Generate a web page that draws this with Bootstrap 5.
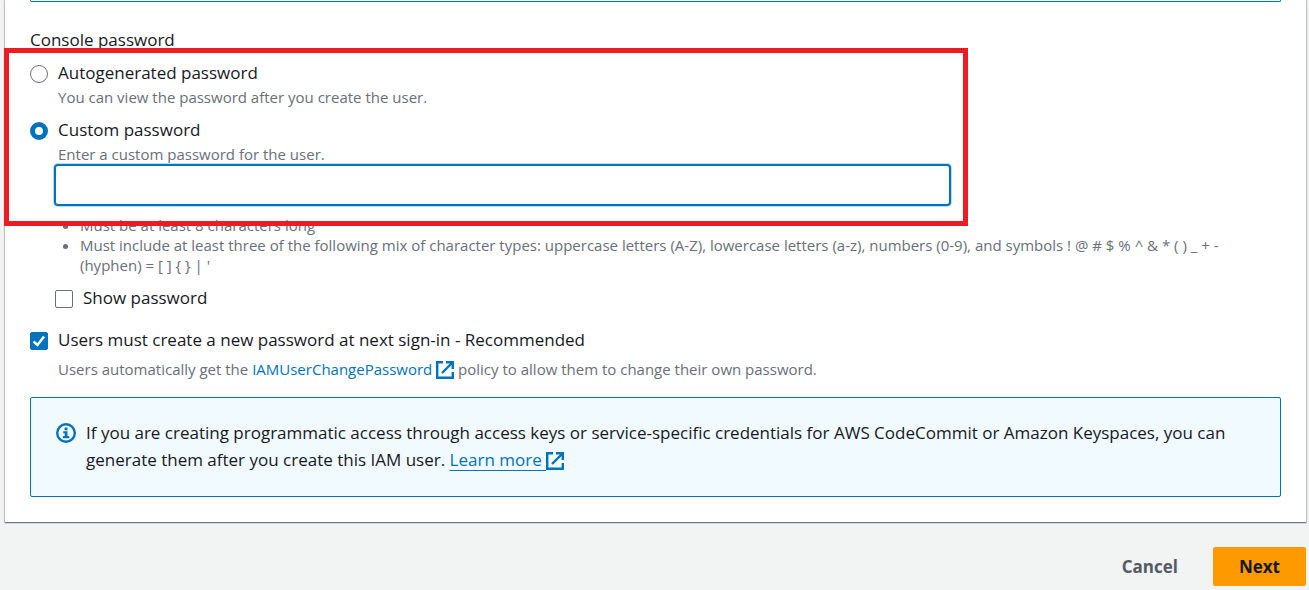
<!DOCTYPE html>
<html lang="en">
<head>
<meta charset="utf-8">
<meta name="viewport" content="width=device-width, initial-scale=1">
<title>Create user</title>
<link href="https://cdn.jsdelivr.net/npm/bootstrap@5.3.0/dist/css/bootstrap.min.css" rel="stylesheet">
<style>
  :root { --brand: #0073bb; --ink: #16191f; --muted: #687078; --line: #687078; }
  body { background: #f2f3f3; color: var(--ink); font-family: "Open Sans", "Noto Sans", sans-serif; font-size: 17px; line-height: 24px; }
  .page { padding: 0 3px 0 5px; }
  .panel { background: #fff; padding: 0 25px 25px; box-shadow: 0 1px 1px #6a757c, 0 0 1px 1px #c9d0d3; }
  .notice-end { height: 2px; border: 1px solid var(--brand); border-top: 0; border-radius: 0 0 2px 2px; background: #f1faff; }
  .section-label { margin-top: 26px; }
  .choices { padding-top: 9px; }
  .highlight { position: absolute; top: -4px; left: -26px; right: 0; bottom: -20px; border: 5px solid #ed1c24; pointer-events: none; z-index: 2; }
  .choice { display: flex; gap: 10px; }
  .form-check-input.tick { flex: none; width: 18px; height: 18px; margin: 4px 0 0; border: 1px solid var(--line); background-color: #fff; }
  .form-check-input.tick[type=checkbox] { border-radius: 2px; }
  .form-check-input.tick:checked { border-color: var(--brand); background-color: var(--brand); }
  .form-check-input.tick[type=checkbox]:checked { background-size: 16px; background-image: url("data:image/svg+xml,%3csvg xmlns='http://www.w3.org/2000/svg' viewBox='0 0 16 16'%3e%3cpath fill='none' stroke='%23fff' stroke-width='2.500' d='M2.500 8.500 6.500 12 13 3.500'/%3e%3c/svg%3e"); }
  .form-check-input.tick[type=radio]:checked { border: 5px solid var(--brand); background: #fff; }
  .hint { color: var(--muted); font-size: 15px; line-height: 20px; }
  .choices .hint { margin-top: 2px; }
  .custom-choice { margin-top: 11px; }
  .secret { width: auto; align-self: stretch; height: 42px; margin: 0 17px 0 24px; border: 2px solid var(--brand); border-radius: 4px; box-shadow: 0 0 0 1px #b9dcf0; }
  .secret:focus { border-color: var(--brand); box-shadow: 0 0 0 1px #b9dcf0; }
  .rules { margin: 9px 24px 0; padding-left: 26px; color: var(--muted); font-size: 15px; line-height: 20px; }
  .show-choice { margin: 11px 0 0 25px; }
  .renew-choice { margin-top: 18px; }
  .renew-choice .hint { margin-top: 7px; }
  a { color: var(--brand); text-decoration: none; }
  .out-icon { width: 18px; height: 18px; fill: none; stroke: var(--brand); stroke-width: 2.4; vertical-align: -4px; }
  .info-box { margin: 18px 0 0; padding: 21px 25px 23px; border: 1px solid var(--brand); border-radius: 2px; background: #f1faff; line-height: 27px; gap: 10px; }
  .info-icon { flex: none; width: 20px; height: 20px; margin-top: 4px; }
  .learn { text-decoration: underline 1px; text-underline-offset: 4px; text-decoration-skip-ink: none; }
  .actions { margin-top: 25px; padding-bottom: 4px; }
  .actions .btn { height: 39px; padding: 0 26px; border: 0; border-radius: 2px; font-size: 17px; font-weight: 700; line-height: 38px; }
  .btn.cancel { color: #545b64; margin-right: 9px; }
  .btn.next { color: var(--ink); background: #ff9900; }
</style>
</head>
<body>
<main class="page">
  <form>
    <section class="panel">
      <div class="notice-end"></div>
      <div class="section-label" id="pw-label">Console password</div>
      <div class="choices position-relative w-75 d-flex flex-column" role="radiogroup" aria-labelledby="pw-label">
        <div class="choice">
          <input class="form-check-input tick" type="radio" name="pw" id="pw-auto">
          <div>
            <label class="d-block" for="pw-auto">Autogenerated password</label>
            <div class="hint">You can view the password after you create the user.</div>
          </div>
        </div>
        <div class="choice custom-choice">
          <input class="form-check-input tick" type="radio" name="pw" id="pw-custom" checked>
          <div>
            <label class="d-block" for="pw-custom">Custom password</label>
            <div class="hint">Enter a custom password for the user.</div>
          </div>
        </div>
        <input class="form-control secret" type="password" aria-label="Custom password">
        <div class="highlight"></div>
      </div>
      <ul class="rules">
        <li>Must be at least 8 characters long</li>
        <li>Must include at least three of the following mix of character types: uppercase letters (A-Z), lowercase letters (a-z), numbers (0-9), and symbols ! @ # $ % ^ &amp; * ( ) _ + - (hyphen) = [ ] { } | '</li>
      </ul>
      <div class="choice show-choice">
        <input class="form-check-input tick" type="checkbox" id="show-pw">
        <label for="show-pw">Show password</label>
      </div>
      <div class="choice renew-choice">
        <input class="form-check-input tick" type="checkbox" id="renew" checked>
        <div>
          <label class="d-block" for="renew">Users must create a new password at next sign-in - Recommended</label>
          <div class="hint">Users automatically get the <a href="#">IAMUserChangePassword <svg class="out-icon" viewBox="0 0 18 18" aria-hidden="true"><path d="M7 1.200H1.200v15.600h15.600V11M10 1.200h6.800V8M16.500 1.500 6 12"/></svg></a> policy to allow them to change their own password.</div>
        </div>
      </div>
      <div class="info-box d-flex">
        <svg class="info-icon" viewBox="0 0 20 20" aria-hidden="true"><circle cx="10" cy="10" r="8.800" fill="none" stroke="#0073bb" stroke-width="2.400"/><path fill="#0073bb" d="M8.600 4.600h2.900v2.600H8.600zM7.200 8.300h4.300v4.700h1.700v2.200H6.900V13h1.800v-2.700H7.200z"/></svg>
        <div>If you are creating programmatic access through access keys or service-specific credentials for AWS CodeCommit or Amazon Keyspaces, you can generate them after you create this IAM user. <a class="learn" href="#">Learn more <svg class="out-icon" viewBox="0 0 18 18" aria-hidden="true"><path d="M7 1.200H1.200v15.600h15.600V11M10 1.200h6.800V8M16.500 1.500 6 12"/></svg></a></div>
      </div>
    </section>
    <div class="actions d-flex justify-content-end">
      <button class="btn cancel" type="button">Cancel</button>
      <button class="btn next" type="submit">Next</button>
    </div>
  </form>
</main>
<script src="https://cdn.jsdelivr.net/npm/bootstrap@5.3.0/dist/js/bootstrap.bundle.min.js"></script>
</body>
</html>
